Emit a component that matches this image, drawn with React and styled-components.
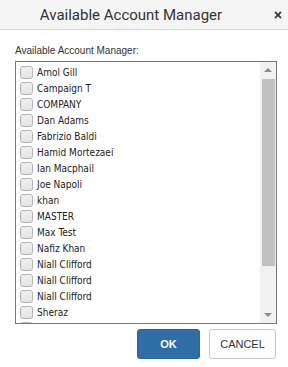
import React from "react";
import styled, { createGlobalStyle } from "styled-components";
import { FaTimes } from "react-icons/fa";

const GlobalStyle = createGlobalStyle`
  * {
    box-sizing: border-box;
  }
  body {
    margin: 0;
    background: #fff;
    font-family: "Liberation Sans", Arial, sans-serif;
  }
`;

const Dialog = styled.div`
  width: 288px;
  height: 367px;
  background: #fff;
  display: flex;
  flex-direction: column;
`;

const Header = styled.div`
  height: 30px;
  display: flex;
  align-items: center;
  background: #f5f5f5;
  border-bottom: 1px solid #d9d9d9;
`;

const Title = styled.h4`
  flex: 1;
  margin: 0;
  text-align: center;
  font-family: Roboto, "Liberation Sans", sans-serif;
  font-weight: 400;
  font-size: 15px;
  color: #333;
`;

const Close = styled.span`
  width: 26px;
  padding-right: 5px;
  display: flex;
  justify-content: flex-end;
  color: #3a3a3a;
`;

const Body = styled.div`
  padding: 15px 11px 0 15px;
`;

const Label = styled.div`
  font-size: 10px;
  line-height: 12px;
  color: #333;
  margin-bottom: 4px;
`;

const ListBox = styled.div`
  height: 263px;
  border: 1px solid #777;
  display: flex;
`;

const Items = styled.div`
  flex: 1;
  overflow: hidden;
  padding-top: 2px;
`;

const ScrollBar = styled.div`
  width: 16px;
  background: #f1f1f1;
  display: flex;
  flex-direction: column;
`;

const ScrollButton = styled.div`
  height: 16px;
  display: flex;
  align-items: center;
  justify-content: center;

  &::before {
    content: "";
    border-left: 4px solid transparent;
    border-right: 4px solid transparent;
    ${(p) =>
      p.down
        ? "border-top: 4px solid #8a8a8a;"
        : "border-bottom: 4px solid #8a8a8a;"}
  }
`;

const Track = styled.div`
  flex: 1;
  padding: 1px 1px 0 2px;
`;

const Thumb = styled.div`
  background: #c1c1c1;
`;

const Row = styled.label`
  display: flex;
  align-items: center;
  height: 16px;
  padding-left: 4px;
  font-family: Tahoma, "DejaVu Sans Condensed", "Liberation Sans", sans-serif;
  font-size: 10px;
  color: #222;
`;

const Check = styled.input`
  appearance: none;
  width: 13px;
  height: 13px;
  margin: 0 4px 0 0;
  border: 1px solid #b5b5b5;
  border-radius: 3px;
  background: linear-gradient(#f2f2f2, #e2e2e2);
`;

const Footer = styled.div`
  display: flex;
  justify-content: flex-end;
  gap: 9px;
  padding: 5px 12px 0 0;
`;

const Button = styled.button`
  height: 30px;
  width: ${(p) => (p.primary ? "63px" : "67px")};
  border-radius: 3px;
  border: 1px solid ${(p) => (p.primary ? "#2a6396" : "#c8c8c8")};
  background: ${(p) => (p.primary ? "#2e6da6" : "#fff")};
  color: ${(p) => (p.primary ? "#fff" : "#333")};
  font-family: "Liberation Sans", Arial, sans-serif;
  font-weight: ${(p) => (p.primary ? 700 : 400)};
  font-size: 11px;
  padding: 0;
`;

const managers = [
  "Amol Gill",
  "Campaign T",
  "COMPANY",
  "Dan Adams",
  "Fabrizio Baldi",
  "Hamid Mortezaei",
  "Ian Macphail",
  "Joe Napoli",
  "khan",
  "MASTER",
  "Max Test",
  "Nafiz Khan",
  "Niall Clifford",
  "Niall Clifford",
  "Niall Clifford",
  "Sheraz",
  "Steve Hall",
];

// thumb size follows the visible part of the full list
const totalRows = 20;
const visibleRows = 16.2;
const thumbHeight = Math.round((visibleRows / totalRows) * 231);

export default function App() {
  return (
    <>
      <GlobalStyle />
      <Dialog>
        <Header>
          <Title>Available Account Manager</Title>
          <Close>
            <FaTimes size={10} />
          </Close>
        </Header>
        <Body>
          <Label>Available Account Manager:</Label>
          <ListBox>
            <Items>
              {managers.map((name, i) => (
                <Row key={i}>
                  <Check type="checkbox" />
                  {name}
                </Row>
              ))}
            </Items>
            <ScrollBar>
              <ScrollButton />
              <Track>
                <Thumb style={{ height: thumbHeight }} />
              </Track>
              <ScrollButton down />
            </ScrollBar>
          </ListBox>
        </Body>
        <Footer>
          <Button primary>OK</Button>
          <Button>CANCEL</Button>
        </Footer>
      </Dialog>
    </>
  );
}
